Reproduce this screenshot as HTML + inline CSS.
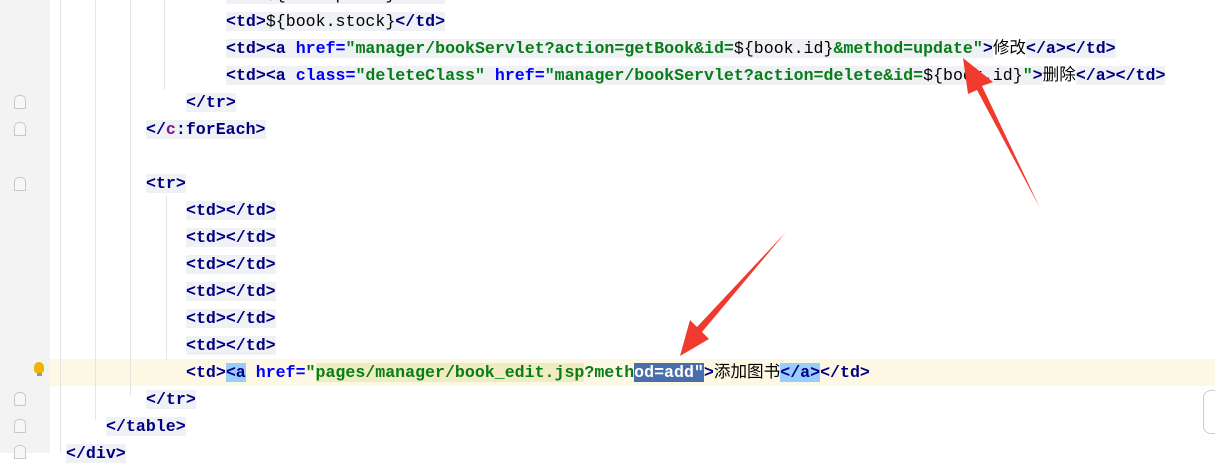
<!DOCTYPE html>
<html><head><meta charset="utf-8"><style>
body{margin:0;width:1215px;height:453px;overflow:hidden;background:#fff;position:relative;font-family:"Liberation Mono","Noto Sans CJK SC",monospace;font-size:16.6px;}
.gut{position:absolute;left:0;top:0;width:50px;height:453px;background:#f3f3f3;}
.l{position:absolute;white-space:pre;height:27px;line-height:27px;}
.t{color:#000080;font-weight:bold}
.a{color:#0000ff;font-weight:bold}
.s{color:#067d17;font-weight:bold}
.bg{background:#eff1f4}
.fold{position:absolute;left:14px;width:10px;height:12px;border:1px solid #c8c8c8;border-radius:5px 5px 1px 1px;background:#f7f7f7;}
.g{position:absolute;width:1px;background:#e4e4e4;}
</style></head><body>
<div class="gut"></div>
<div style="position:absolute;left:50px;top:359px;width:1165px;height:27px;background:#fcf8e3"></div>
<div class="g" style="left:60px;top:0;height:453px"></div>
<div class="g" style="left:95px;top:0;height:420px"></div>
<div class="g" style="left:130px;top:0;height:395px"></div>
<div class="g" style="left:164px;top:0;height:90px"></div>
<div class="g" style="left:166px;top:196px;height:165px"></div>
<div class="fold" style="top:95px"></div>
<div class="fold" style="top:122px"></div>
<div class="fold" style="top:177px"></div>
<div class="fold" style="top:392px"></div>
<div class="fold" style="top:419px"></div>
<div class="fold" style="top:445px"></div>
<div style="position:absolute;left:34px;top:362px;width:10px;height:11px;border-radius:5px 5px 3px 3px;background:#f0b400"></div>
<div style="position:absolute;left:37px;top:373px;width:5px;height:3px;background:#999"></div>

<div class="l" style="left:226px;top:-19px"><span class="bg"><span class="t">&lt;td&gt;</span>${book.price}<span class="t">&lt;/td&gt;</span></span></div>
<div class="l" style="left:226px;top:8px"><span class="bg"><span class="t">&lt;td&gt;</span>${book.stock}<span class="t">&lt;/td&gt;</span></span></div>
<div class="l" style="left:226px;top:35px"><span class="bg"><span class="t">&lt;td&gt;&lt;a </span><span class="a">href=</span><span class="s">"manager/bookServlet?action=getBook&amp;id=</span>${book.id}<span class="s">&amp;method=update"</span><span class="t">&gt;</span></span>修改<span class="bg"><span class="t">&lt;/a&gt;&lt;/td&gt;</span></span></div>
<div class="l" style="left:226px;top:62px"><span class="bg"><span class="t">&lt;td&gt;&lt;a </span><span class="a">class=</span><span class="s">"deleteClass" </span><span class="a">href=</span><span class="s">"manager/bookServlet?action=delete&amp;id=</span>${book.id}<span class="s">"</span><span class="t">&gt;</span></span>删除<span class="bg"><span class="t">&lt;/a&gt;&lt;/td&gt;</span></span></div>
<div class="l" style="left:186px;top:89px"><span class="bg t">&lt;/tr&gt;</span></div>
<div class="l" style="left:146px;top:116px"><span class="bg t">&lt;/<span style="color:#871094">c</span>:forEach&gt;</span></div>
<div class="l" style="left:146px;top:170px"><span class="bg t">&lt;tr&gt;</span></div>
<div class="l" style="left:186px;top:197px"><span class="bg t">&lt;td&gt;&lt;/td&gt;</span></div>
<div class="l" style="left:186px;top:224px"><span class="bg t">&lt;td&gt;&lt;/td&gt;</span></div>
<div class="l" style="left:186px;top:251px"><span class="bg t">&lt;td&gt;&lt;/td&gt;</span></div>
<div class="l" style="left:186px;top:278px"><span class="bg t">&lt;td&gt;&lt;/td&gt;</span></div>
<div class="l" style="left:186px;top:305px"><span class="bg t">&lt;td&gt;&lt;/td&gt;</span></div>
<div class="l" style="left:186px;top:332px"><span class="bg t">&lt;td&gt;&lt;/td&gt;</span></div>
<div class="l" style="left:186px;top:359px"><span class="t">&lt;td&gt;<span style="background:#99ccff">&lt;a</span> </span><span class="a">href=</span><span class="s">"<span style="background:#f0ebc0">pages/manager/book_edit.jsp</span>?meth</span><span style="background:#4a6eab;color:#fff;font-weight:bold">od=add"</span><span class="t">&gt;</span>添加图书<span class="t" style="background:#99ccff">&lt;/a&gt;</span><span class="t">&lt;/td&gt;</span></div>
<div class="l" style="left:146px;top:386px"><span class="bg t">&lt;/tr&gt;</span></div>
<div class="l" style="left:106px;top:413px"><span class="bg t">&lt;/table&gt;</span></div>
<div class="l" style="left:66px;top:440px"><span class="bg t">&lt;/div&gt;</span></div>

<div style="position:absolute;left:1203px;top:390px;width:20px;height:42px;border:1px solid #ccc;border-radius:8px;background:#fff"></div>

<svg width="1215" height="453" style="position:absolute;left:0;top:0">
<polygon points="963,58 993,82 982,86 1040,208 977,90 968,94" fill="#f03a2e"/>
<polygon points="680,356 690,320 697,327 786,232 702,332 709,339" fill="#f03a2e"/>
</svg>
</body></html>
